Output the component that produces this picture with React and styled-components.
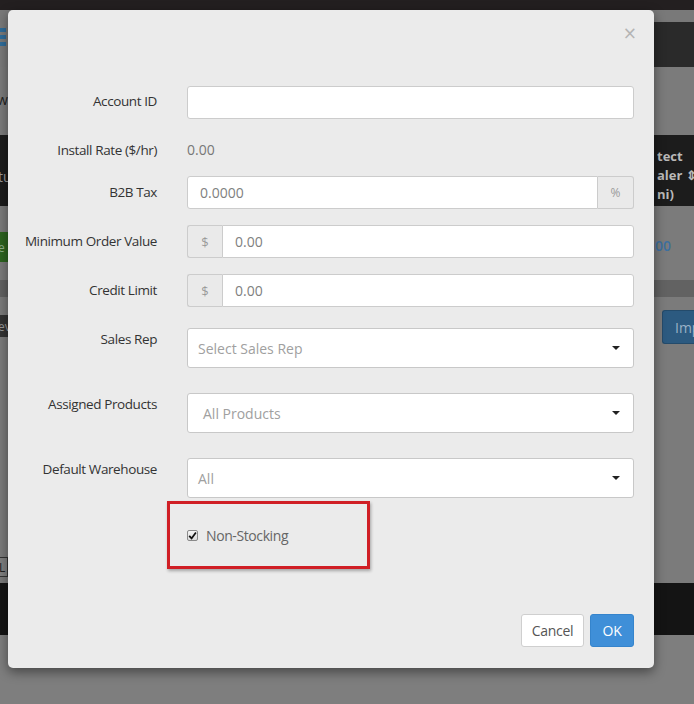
import React from "react";
import styled, { createGlobalStyle } from "styled-components";

const Global = createGlobalStyle`
  html, body { margin: 0; padding: 0; }
  body {
    background: #7d7d7d;
    font-family: "Open Sans", "Liberation Sans", sans-serif;
  }
`;

/* ---------- dimmed page behind the dialog ---------- */
const Page = styled.div`
  position: relative;
  width: 694px;
  height: 704px;
  overflow: hidden;
  background: #7e7e7e;
  display: flex;
  flex-direction: column;
`;

const Band = styled.div`
  flex: none;
  height: ${(p) => p.$h}px;
  background: ${(p) => p.$bg};
  display: flex;
  justify-content: space-between;
  align-items: stretch;
`;

const Side = styled.div`
  display: flex;
  flex-direction: column;
  justify-content: ${(p) => p.$justify || "flex-start"};
  padding-top: ${(p) => p.$pt || 0}px;
  padding-bottom: ${(p) => p.$pb || 0}px;
  width: ${(p) => (p.$w ? `${p.$w}px` : "auto")};
  background: ${(p) => p.$bg || "transparent"};
  box-sizing: border-box;
  overflow: hidden;
`;

const MenuIcon = styled.div`
  width: 6px;
  display: flex;
  flex-direction: column;
  gap: 3px;
  & > span {
    height: 4px;
    background: #2f6d9b;
  }
`;

const EdgeText = styled.span`
  font-size: 14px;
  line-height: 18px;
  color: ${(p) => p.$c};
  font-weight: ${(p) => p.$fw || 400};
  white-space: nowrap;
`;

const HeaderText = styled.div`
  font-size: 13px;
  line-height: 19px;
  font-weight: 700;
  color: #b9b9b9;
  white-space: nowrap;
`;

const Chip = styled.div`
  height: ${(p) => p.$h}px;
  width: 10px;
  margin-left: -2px;
  background: ${(p) => p.$bg};
  border: ${(p) => p.$border || "none"};
  color: ${(p) => p.$c};
  font-size: 12px;
  display: flex;
  align-items: center;
  overflow: hidden;
  box-sizing: border-box;
  white-space: nowrap;
`;

const ImpButton = styled.div`
  height: 34px;
  margin-left: 8px;
  background: #2c5a80;
  border: 1px solid #244b6b;
  border-right: none;
  border-radius: 3px 0 0 3px;
  color: #9bb2c6;
  font-size: 14px;
  display: flex;
  align-items: center;
  padding-left: 12px;
  box-sizing: border-box;
`;

/* ---------- dialog ---------- */
const Modal = styled.div`
  position: absolute;
  left: 8px;
  top: 10px;
  width: 646px;
  height: 658px;
  background: #ebebeb;
  border-radius: 5px;
  box-shadow: 0 4px 12px rgba(0, 0, 0, 0.45);
  display: flex;
  flex-direction: column;
`;

const ModalHeader = styled.div`
  flex: none;
  height: 46px;
  display: flex;
  justify-content: flex-end;
  align-items: center;
  padding-right: 17px;
`;

const Close = styled.button`
  border: 0;
  background: none;
  padding: 0;
  font-family: "DejaVu Sans", sans-serif;
  font-size: 17px;
  line-height: 1;
  color: #b4b4b4;
`;

const ModalBody = styled.div`
  padding: 30px 20px 0 15px;
`;

const FormRow = styled.div`
  display: grid;
  grid-template-columns: 134px 447px;
  column-gap: 30px;
  margin-bottom: ${(p) => p.$mb || 0}px;
`;

const Label = styled.label`
  text-align: right;
  font-size: 13.5px;
  color: #333;
  letter-spacing: -0.4px;
  line-height: ${(p) => p.$lh}px;
  padding-top: ${(p) => p.$pt || 0}px;
  white-space: nowrap;
`;

const Static = styled.div`
  font-size: 14px;
  line-height: 20px;
  padding-top: 6px;
  color: #777;
  height: 27px;
  box-sizing: border-box;
`;

const InputGroup = styled.div`
  display: flex;
  height: 33px;
`;

const Input = styled.input`
  flex: 1;
  min-width: 0;
  height: 33px;
  box-sizing: border-box;
  margin: 0;
  border: 1px solid #ccc;
  border-radius: ${(p) => p.$radius || "3px"};
  background: #fff;
  padding: 0 12px;
  font-family: "Open Sans", "Liberation Sans", sans-serif;
  font-size: 14px;
  color: #808080;
  outline: none;
`;

const Addon = styled.span`
  flex: none;
  width: ${(p) => p.$w}px;
  box-sizing: border-box;
  background: #eaeaea;
  border: 1px solid #ccc;
  border-left-width: ${(p) => (p.$side === "right" ? 0 : 1)}px;
  border-right-width: ${(p) => (p.$side === "left" ? 0 : 1)}px;
  border-radius: ${(p) => (p.$side === "left" ? "3px 0 0 3px" : "0 3px 3px 0")};
  display: flex;
  align-items: center;
  justify-content: center;
  font-size: ${(p) => p.$fs || 12}px;
  color: #9a9a9a;
`;

const Select = styled.div`
  height: 40px;
  box-sizing: border-box;
  background: #fff;
  border: 1px solid #c8c8c8;
  border-radius: 3px;
  display: flex;
  align-items: center;
  justify-content: space-between;
  padding: 0 13px 0 ${(p) => p.$pl}px;
  font-size: 14px;
  color: #a0a0a0;
`;

const Caret = styled.span`
  width: 0;
  height: 0;
  border-left: 4px solid transparent;
  border-right: 4px solid transparent;
  border-top: 4px solid #222;
`;

const Highlight = styled.div`
  margin-left: -20px;
  margin-top: 3px;
  width: 203px;
  height: 68px;
  box-sizing: border-box;
  border: 3px solid #d01f25;
  box-shadow: 1px 2px 3px rgba(0, 0, 0, 0.3);
  display: flex;
  align-items: center;
  padding-left: 17px;
  gap: 8px;
`;

const CheckBox = styled.span`
  width: 11px;
  height: 11px;
  box-sizing: border-box;
  border: 1px solid #8a8a8a;
  border-radius: 2px;
  background: linear-gradient(#f4f4f4, #dcdcdc);
  display: flex;
  align-items: center;
  justify-content: center;
  margin-top: 1px;
`;

const CheckText = styled.span`
  font-size: 14px;
  color: #666;
  letter-spacing: -0.4px;
`;

const Footer = styled.div`
  margin-top: auto;
  display: flex;
  justify-content: flex-end;
  gap: 6px;
  padding: 0 20px 21px;
`;

const Button = styled.button`
  height: 33px;
  width: ${(p) => p.$w}px;
  padding: 0;
  box-sizing: border-box;
  border-radius: 3px;
  font-family: "Open Sans", "Liberation Sans", sans-serif;
  font-size: 14px;
  letter-spacing: -0.3px;
  border: 1px solid ${(p) => (p.$primary ? "#3584cc" : "#cfcfcf")};
  background: ${(p) => (p.$primary ? "#3f8fd8" : "#fff")};
  color: ${(p) => (p.$primary ? "#fff" : "#555")};
`;

export default function App() {
  return (
    <>
      <Global />
      <Page>
        <Band $h={10} $bg="#231f20" />
        <Band $h={12} $bg="#797979" />
        <Band $h={45} $bg="#7a7a7a">
          <Side $pt={6}>
            <MenuIcon>
              <span />
              <span />
              <span />
            </MenuIcon>
          </Side>
          <Side $w={120} $bg="#2a2a2a" />
        </Band>
        <Band $h={68} $bg="#7b7b7b">
          <Side $pt={24}>
            <EdgeText $c="#222" style={{ marginLeft: -3 }}>w</EdgeText>
          </Side>
        </Band>
        <Band $h={71} $bg="#1c1c1c">
          <Side $pt={33}>
            <EdgeText $c="#9a9a9a" style={{ marginLeft: -2 }}>tu</EdgeText>
          </Side>
          <Side $w={37} $pt={12}>
            <HeaderText>tect</HeaderText>
            <HeaderText>aler ⇕</HeaderText>
            <HeaderText>ni)</HeaderText>
          </Side>
        </Band>
        <Band $h={74} $bg="#7b7b7b">
          <Side $pt={26}>
            <Chip $h={30} $bg="#2d6420" $c="#8fb08a">e</Chip>
          </Side>
          <Side $w={39} $pt={31}>
            <EdgeText $c="#3d70a0" $fw={600}>00</EdgeText>
          </Side>
        </Band>
        <Band $h={17} $bg="#626262" />
        <Band $h={286} $bg="#7b7b7b">
          <Side $pt={18} $pb={6} $justify="space-between">
            <Chip $h={22} $bg="#333" $c="#999">ev</Chip>
            <Chip $h={20} $bg="#808080" $border="1px solid #333" $c="#222">L</Chip>
          </Side>
          <Side $w={40} $pt={13}>
            <ImpButton>Imp</ImpButton>
          </Side>
        </Band>
        <Band $h={52} $bg="#141414" />

        <Modal>
          <ModalHeader>
            <Close aria-label="Close">×</Close>
          </ModalHeader>
          <ModalBody>
            <FormRow $mb={15}>
              <Label $lh={31}>Account ID</Label>
              <Input defaultValue="" />
            </FormRow>
            <FormRow $mb={15}>
              <Label $lh={20} $pt={6}>Install Rate ($/hr)</Label>
              <Static>0.00</Static>
            </FormRow>
            <FormRow $mb={16}>
              <Label $lh={33}>B2B Tax</Label>
              <InputGroup>
                <Input defaultValue="0.0000" $radius="3px 0 0 3px" />
                <Addon $w={36} $side="right">%</Addon>
              </InputGroup>
            </FormRow>
            <FormRow $mb={16}>
              <Label $lh={32}>Minimum Order Value</Label>
              <InputGroup>
                <Addon $w={35} $side="left" $fs={13}>$</Addon>
                <Input defaultValue="0.00" $radius="0 3px 3px 0" />
              </InputGroup>
            </FormRow>
            <FormRow $mb={21}>
              <Label $lh={32}>Credit Limit</Label>
              <InputGroup>
                <Addon $w={35} $side="left" $fs={13}>$</Addon>
                <Input defaultValue="0.00" $radius="0 3px 3px 0" />
              </InputGroup>
            </FormRow>
            <FormRow $mb={25}>
              <Label $lh={20} $pt={1}>Sales Rep</Label>
              <Select $pl={10}>
                <span>Select Sales Rep</span>
                <Caret />
              </Select>
            </FormRow>
            <FormRow $mb={25}>
              <Label $lh={20} $pt={1}>Assigned Products</Label>
              <Select $pl={15}>
                <span>All Products</span>
                <Caret />
              </Select>
            </FormRow>
            <FormRow>
              <Label $lh={20} $pt={1}>Default Warehouse</Label>
              <Select $pl={10}>
                <span>All</span>
                <Caret />
              </Select>
            </FormRow>
            <FormRow>
              <span />
              <Highlight>
                <CheckBox>
                  <svg width="9" height="9" viewBox="0 0 9 9">
                    <path d="M1.2 4.8 L3.6 7.4 L7.9 1.4" fill="none" stroke="#111" strokeWidth="1.8" />
                  </svg>
                </CheckBox>
                <CheckText>Non-Stocking</CheckText>
              </Highlight>
            </FormRow>
          </ModalBody>
          <Footer>
            <Button $w={63}>Cancel</Button>
            <Button $w={44} $primary>OK</Button>
          </Footer>
        </Modal>
      </Page>
    </>
  );
}
